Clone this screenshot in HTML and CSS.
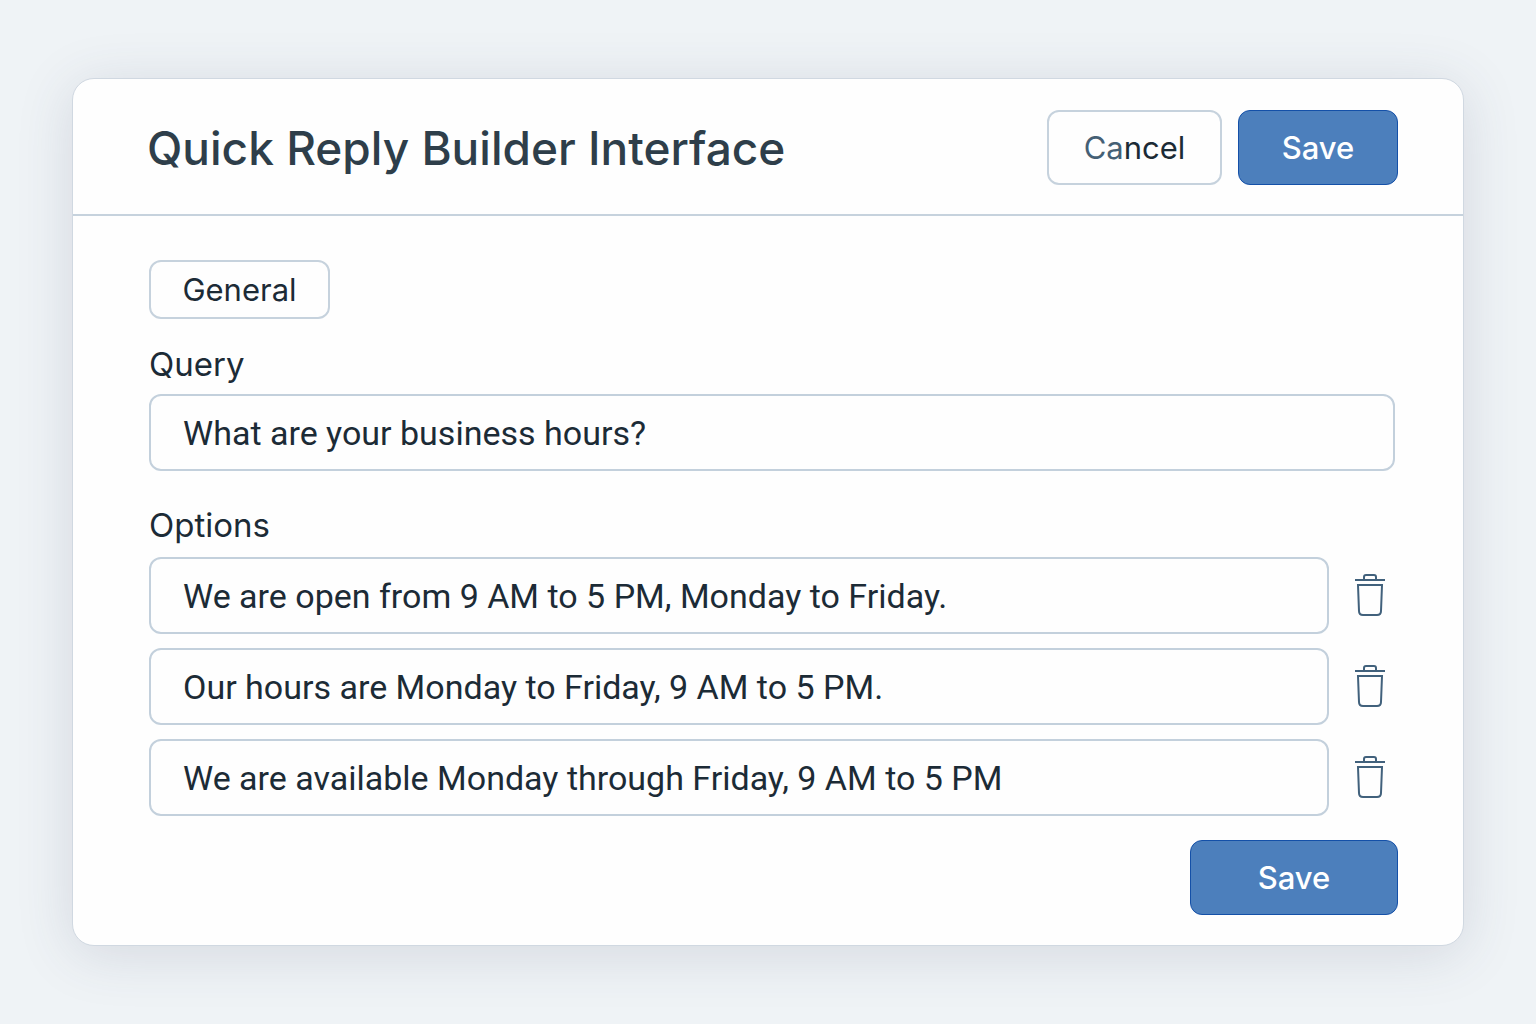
FILE: index.html
```
<!DOCTYPE html>
<html lang="en">
<head>
  <meta charset="UTF-8">
  <meta name="viewport" content="width=device-width, initial-scale=1.0">
  <title>Quick Reply Builder Interface</title>
  <link rel="stylesheet" href="styles.css">
</head>
<body>

  <svg class="sprite" aria-hidden="true">
    <symbol id="trash" viewBox="0 0 32 44">
      <path d="M1 6H31M10 6V3Q10 1 12 1H20Q22 1 22 3V6"/>
      <path d="M4 11H28L27 37Q27 41 23 41H9Q5 41 5 37Z"/>
    </symbol>
  </svg>

  <form class="card" onsubmit="return false">
    <header class="card-header">
      <h1>Quick Reply Builder Interface</h1>
      <div class="actions">
        <button type="button" class="btn cancel"><span>Ca</span>ncel</button>
        <button type="submit" class="btn save">Save</button>
      </div>
    </header>

    <main class="card-body">
      <button type="button" class="category">General</button>

      <label class="label" for="query">Query</label>
      <input class="field" type="text" id="query" value="What are your business hours?">

      <h2 class="label options-label" id="options-label">Options</h2>
      <div class="options" role="group" aria-labelledby="options-label">
        <div class="option">
          <input class="field" type="text" aria-label="Option 1" value="We are open from 9 AM to 5 PM, Monday to Friday.">
          <button type="button" class="delete" aria-label="Delete option 1"><svg><use href="#trash"/></svg></button>
        </div>
        <div class="option">
          <input class="field" type="text" aria-label="Option 2" value="Our hours are Monday to Friday, 9 AM to 5 PM.">
          <button type="button" class="delete" aria-label="Delete option 2"><svg><use href="#trash"/></svg></button>
        </div>
        <div class="option">
          <input class="field" type="text" aria-label="Option 3" value="We are available Monday through Friday, 9 AM to 5 PM">
          <button type="button" class="delete" aria-label="Delete option 3"><svg><use href="#trash"/></svg></button>
        </div>
      </div>
    </main>

    <footer class="card-footer">
      <button type="submit" class="btn save wide">Save</button>
    </footer>
  </form>

</body>
</html>
```

FILE: styles.css
```
* {
  box-sizing: border-box;
}

body {
  margin: 0;
  padding: 78px 72px;
  min-height: 100vh;
  background-color: #eff3f6;
  font-family: Inter, "Liberation Sans", sans-serif;
  color: #1c2b36;
}

button, input {
  font-family: inherit;
  color: inherit;
}

button {
  cursor: pointer;
}

.sprite {
  display: none;
}

.card {
  background-color: #fefefe;
  border: 1px solid #d0d8e1;
  border-radius: 22px;
  box-shadow: 0 8px 56px rgba(60, 70, 100, 0.15);
}

.card-header {
  display: flex;
  align-items: center;
  justify-content: space-between;
  padding: 31px 65px 29px 74px;
  border-bottom: 2px solid #c6d2dd;
}

h1 {
  margin: 0;
  font-size: 46px;
  font-weight: 500;
  color: #2e3e4a;
}

.actions {
  display: flex;
  gap: 16px;
}

.btn {
  height: 75px;
  width: 160px;
  padding: 0;
  border-radius: 12px;
  font-size: 31px;
}

.cancel {
  width: 175px;
  background-color: #fefefe;
  border: 2px solid #c6d2dd;
}

.cancel span {
  color: #456075;
}

.save {
  background-color: #4c7fbc;
  border: 1px solid #1450a8;
  color: #fff;
  font-weight: 500;
}

.wide {
  width: 208px;
}

.card-body {
  display: flex;
  flex-direction: column;
  align-items: flex-start;
  padding: 44px 68px 24px 76px;
}

.category {
  width: 181px;
  height: 59px;
  padding: 0;
  margin-bottom: 25px;
  background-color: #fefefe;
  border: 2px solid #c6d2dd;
  border-radius: 12px;
  font-size: 31px;
}

.label {
  margin: 0 0 10px;
  font-size: 33px;
  font-weight: 400;
  line-height: 40px;
}

.options-label {
  margin: 34px 0 12px;
}

.field {
  width: 100%;
  height: 77px;
  padding: 0 32px;
  background-color: #fefefe;
  border: 2px solid #c3d0dc;
  border-radius: 12px;
  font-family: Roboto, "Liberation Sans", sans-serif;
  font-size: 34px;
}

.options {
  display: flex;
  flex-direction: column;
  gap: 14px;
  width: 100%;
}

.option {
  display: flex;
  align-items: center;
  gap: 25px;
}

.option .field {
  flex: 1;
  min-width: 0;
}

.delete {
  display: flex;
  padding: 0 9px 0 0;
  background: none;
  border: none;
  color: #41617c;
}

.delete svg {
  width: 32px;
  height: 44px;
  fill: none;
  stroke: currentColor;
  stroke-width: 2;
}

.card-footer {
  display: flex;
  justify-content: flex-end;
  padding: 0 65px 30px;
}
```
